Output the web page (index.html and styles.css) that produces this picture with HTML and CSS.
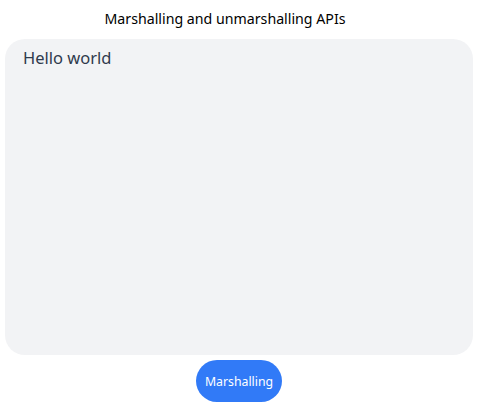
FILE: index.html
```html
<!DOCTYPE html>
<html>
<head>
<meta charset="utf-8">
<link rel="stylesheet" href="styles.css">
</head>
<body>
<div class="page">
  <div class="title">Marshalling and unmarshalling APIs</div>
  <div class="panel"><span class="hello">Hello world</span></div>
  <button class="btn">Marshalling</button>
</div>
</body>
</html>
```
FILE: styles.css
```css
html, body { margin: 0; padding: 0; background: #ffffff; }
.page {
  width: 478px;
  height: 410px;
  display: flex;
  flex-direction: column;
  align-items: center;
  font-family: "Noto Sans", "Open Sans", sans-serif;
}
.title {
  height: 39px;
  line-height: 38px;
  font-size: 14.2px;
  color: #000000;
  margin-right: 28px;
}
.panel {
  box-sizing: border-box;
  width: 468px;
  height: 316px;
  background: #f2f3f5;
  border-radius: 20px;
  padding: 7px 18px;
}
.hello {
  font-size: 16.5px;
  color: #2f3a4c;
}
.btn {
  margin-top: 5px;
  width: 86px;
  height: 42px;
  border: none;
  border-radius: 21px;
  background: #317af7;
  color: #ffffff;
  font-family: "Noto Sans", "Open Sans", sans-serif;
  font-size: 12.3px;
  padding: 0;
}
```
